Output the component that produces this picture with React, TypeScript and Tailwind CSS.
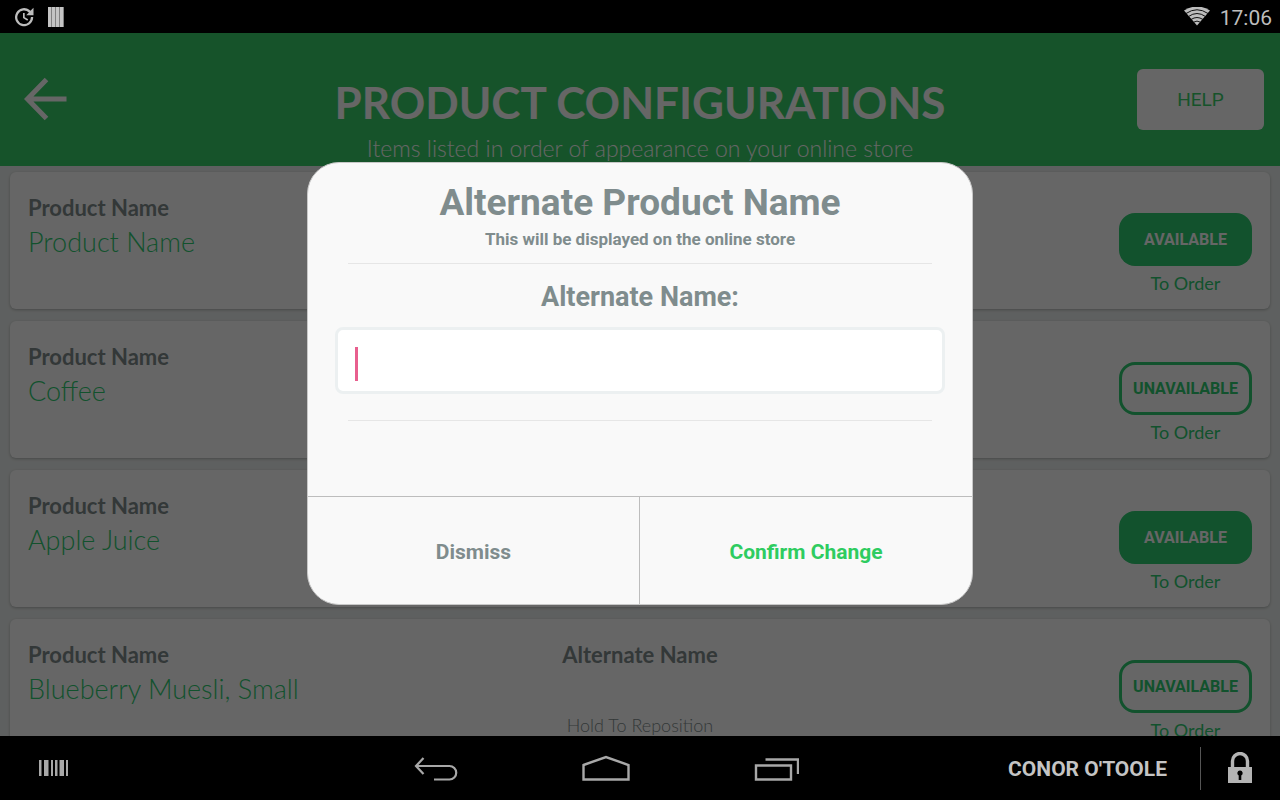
import { useState } from "react";

type Product = { id: number; name: string; alternate: string; available: boolean };

const initialProducts: Product[] = [
  { id: 1, name: "Product Name", alternate: "", available: true },
  { id: 2, name: "Coffee", alternate: "", available: false },
  { id: 3, name: "Apple Juice", alternate: "", available: true },
  { id: 4, name: "Blueberry Muesli, Small", alternate: "", available: false },
];

function StatusBar() {
  return (
    <div className="flex h-[33px] shrink-0 items-center justify-between bg-black pl-3 pr-2 text-[#bdbdbd]">
      <div className="flex items-center gap-3">
        <svg className="size-6" viewBox="0 0 24 24" fill="currentColor">
          <path d="M21.500 10.300h-7.300l2.700-2.900a6.800 6.800 0 1 0 2 4.600h2.300A9.100 9.100 0 1 1 18.500 5.700L21.500 2.700v7.600zM12.700 8v4.200l3.500 2.100-.9 1.400L11 13V8h1.700z" />
        </svg>
        <svg className="h-5 w-4" viewBox="0 0 16 20">
          <path d="M0 0h16v20H0z" fill="#808080" />
          <path d="M0 0h3v20H0zM4 0h3v20H4zM8 0h3v20H8zM12 0h3v20h-3z" fill="#c4c4c4" />
        </svg>
      </div>
      <div className="flex items-center gap-2">
        <svg className="h-5 w-7" viewBox="0 0 28 20" fill="none">
          <path d="M13 18.500L0 3.500Q13-4.500 26 3.500z" fill="#bdbdbd" />
          <path d="M2 6.500Q13-1 24 6.500M4.500 9.500Q13 3.500 21.500 9.500M7 12.500Q13 8.500 19 12.500M9.500 15.200Q13 13 16.500 15.200" stroke="#111" strokeWidth="1" />
        </svg>
        <span className="pt-0.5 text-[21px] leading-6">17:06</span>
      </div>
    </div>
  );
}

function Header() {
  return (
    <header className="flex h-[133px] items-start justify-between bg-[#37d069] px-4 pt-9">
      <button aria-label="Back" className="mt-1 flex h-[52px] w-[127px] items-center pl-2">
        <svg className="h-11 w-11" viewBox="0 0 44 44" fill="none" stroke="white" strokeWidth="5">
          <path d="M22.500 2.500L3.500 22l19 19.500M4 22h38.500" />
        </svg>
      </button>
      <div className="pt-[7px] text-center font-['Lato',sans-serif] text-white">
        <h1 className="text-[44px] font-bold leading-[52px]">PRODUCT CONFIGURATIONS</h1>
        <p className="mt-1 text-[23px] font-light leading-8">Items listed in order of appearance on your online store</p>
      </div>
      <button className="h-[61px] w-[127px] rounded-md bg-white pt-0.5 text-[19px] text-[#37d069]">HELP</button>
    </header>
  );
}

function ProductCard({ product, onToggle }: { product: Product; onToggle: () => void }) {
  return (
    <li className="grid h-[137px] shrink-0 grid-cols-[1fr_auto_1fr] rounded-md bg-white px-[18px] font-['Lato',sans-serif] shadow-[0_1px_3px_rgba(0,0,0,0.25)]">
      <div className="pt-6">
        <div className="text-[22px] font-bold leading-6 text-[#7f8c8d]">Product Name</div>
        <div className="mt-1 text-[27px] font-light leading-9 text-[#2ecc71]">{product.name}</div>
      </div>
      <div className="flex flex-col items-center pt-6">
        <div className="text-[22px] font-bold leading-6 text-[#7f8c8d]">Alternate Name</div>
        <div className="mt-1 h-9 text-[27px] font-light leading-9 text-[#2ecc71]">{product.alternate}</div>
        <div className="mt-1.5 text-[18px] font-light leading-6 text-[#7f8c8d]">Hold To Reposition</div>
      </div>
      <div className="flex flex-col items-center justify-self-end pt-[41px]">
        <button
          onClick={onToggle}
          className={
            product.available
              ? "h-[53px] w-[133px] rounded-2xl bg-[#2ecc71] font-['Roboto',sans-serif] text-[16px] font-bold text-white"
              : "h-[53px] w-[133px] rounded-2xl border-3 border-[#2ecc71] font-['Roboto',sans-serif] text-[16px] font-bold text-[#2ecc71]"
          }
        >
          {product.available ? "AVAILABLE" : "UNAVAILABLE"}
        </button>
        <div className="mt-[5px] text-[18px] leading-6 text-[#2ecc71]">To Order</div>
      </div>
    </li>
  );
}

function NameDialog() {
  const [name, setName] = useState("");

  return (
    <div className="absolute inset-0 flex items-center justify-center bg-black/60">
      <div role="dialog" aria-modal="true" aria-labelledby="dialog-title" className="mb-0.5 w-full max-w-[666px] overflow-hidden rounded-[32px] border border-[#c8c8c8] bg-[#f9f9f9] text-center font-bold text-[#7f8c8d]">
        <div className="px-[27px] pt-4 pb-[75px]">
          <h2 id="dialog-title" className="text-[37px] leading-12">Alternate Product Name</h2>
          <p className="text-[17px] leading-6">This will be displayed on the online store</p>
          <hr className="mx-[13px] mt-3 border-[#e6e6e6]" />
          <label htmlFor="alternate" className="mt-[15px] block text-[27px] leading-9">Alternate Name:</label>
          <div className="relative mt-3">
            <input
              id="alternate"
              value={name}
              onChange={e => setName(e.target.value)}
              className="block h-[67px] w-full rounded-lg border-3 border-[#ecf0f1] bg-white px-4 text-[28px] font-normal caret-[#e85f8e] outline-none"
            />
            {name === "" && <span className="pointer-events-none absolute left-5 top-5 h-[34px] w-[3px] bg-[#e85f8e]" />}
          </div>
          <hr className="mx-[13px] mt-[26px] border-[#e6e6e6]" />
        </div>
        <div className="grid h-[108px] grid-cols-2 border-t border-[#bdbdbd] text-[21px]">
          <button className="border-r border-[#bdbdbd] pt-1">Dismiss</button>
          <button className="pt-1 text-[#2ecc60]">Confirm Change</button>
        </div>
      </div>
    </div>
  );
}

function NavBar() {
  return (
    <nav className="grid h-16 shrink-0 grid-cols-[1fr_auto_1fr] items-center bg-black text-[#a8a8a8]">
      <button aria-label="Scan barcode" className="ml-[39px] w-[30px]">
        <svg className="h-4 w-[30px]" viewBox="0 0 30 16" fill="currentColor">
          <path d="M0 0h2.500v16H0zM5 0h4.500v16H5zM12 0h2v16h-2zM16 0h2.500v16H16zM20.500 0h4.500v16h-4.500zM27 0h2v16h-2z" />
        </svg>
      </button>
      <div className="flex items-center gap-[124px] pr-[68px] pt-0.5">
        <button aria-label="Back">
          <svg className="h-7 w-11" viewBox="0 0 44 28" fill="none" stroke="currentColor" strokeWidth="2.200">
            <path d="M9.500 3L2 11l7.500 8M2 11h33.500a6.500 6.500 0 0 1 0 13.500H20" />
          </svg>
        </button>
        <button aria-label="Home">
          <svg className="h-7 w-12" viewBox="0 0 48 28" fill="none" stroke="currentColor" strokeWidth="2.400">
            <path d="M1.500 10L24 2l22.500 8v14.500h-45z" />
          </svg>
        </button>
        <button aria-label="Recent apps">
          <svg className="h-7 w-[45px]" viewBox="0 0 45 28" fill="none" stroke="currentColor" strokeWidth="2.400">
            <path d="M2 10.500h35v14H2zM11.500 4.500H44V19" />
          </svg>
        </button>
      </div>
      <div className="flex items-center justify-end pr-7">
        <span className="pt-1 text-[21px] font-bold text-[#c4c4c4]">CONOR O'TOOLE</span>
        <span className="ml-[33px] h-[43px] w-px bg-[#555]" />
        <button aria-label="Lock" className="ml-[27px]">
          <svg className="h-8 w-6" viewBox="0 0 24 32">
            <path d="M4.500 16V9a7.500 7.500 0 0 1 15 0v7" fill="none" stroke="#b4b4b4" strokeWidth="3.400" />
            <path d="M0 15h24v16H0z" fill="#b4b4b4" />
            <path d="M12 18.500a2.600 2.600 0 0 1 1.300 4.900V28h-2.600v-4.600A2.600 2.600 0 0 1 12 18.500z" fill="#000" />
          </svg>
        </button>
      </div>
    </nav>
  );
}

export default function App() {
  const [products, setProducts] = useState(initialProducts);

  function toggle(id: number) {
    setProducts(prev => prev.map(p => (p.id === id ? { ...p, available: !p.available } : p)));
  }

  return (
    <div className="flex h-screen flex-col overflow-hidden font-['Roboto',sans-serif]">
      <StatusBar />
      <main className="relative min-h-0 flex-1 overflow-hidden bg-[#ecf0ef]">
        <Header />
        <ul className="flex flex-col gap-3 px-2.5 pt-1.5">
          {products.map(p => (
            <ProductCard key={p.id} product={p} onToggle={() => toggle(p.id)} />
          ))}
        </ul>
        <NameDialog />
      </main>
      <NavBar />
    </div>
  );
}
